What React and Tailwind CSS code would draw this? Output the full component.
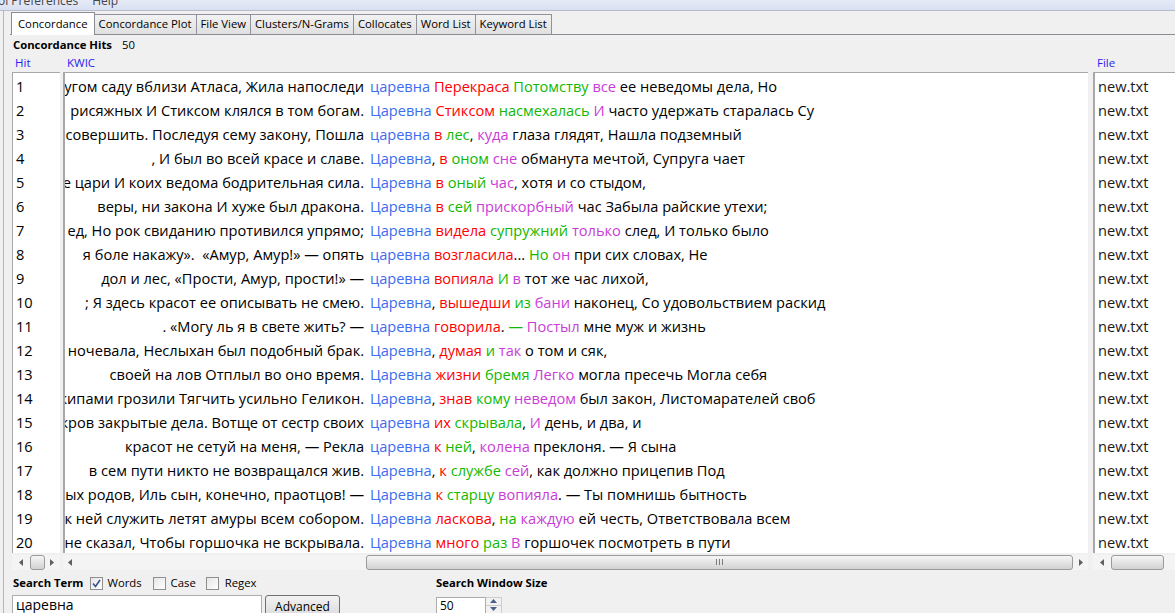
const ROWS = [
  ["угом саду вблизи Атласа, Жила напоследи", "царевна", [[" "], ["r", "Перекраса"], [" "], ["g", "Потомству"], [" "], ["m", "все"]], " ее неведомы дела, Но"],
  ["рисяжных И Стиксом клялся в том богам.", "Царевна", [[" "], ["r", "Стиксом"], [" "], ["g", "насмехалась"], [" "], ["m", "И"]], " часто удержать старалась Су"],
  ["совершить. Последуя сему закону, Пошла", "царевна", [[" "], ["r", "в"], [" "], ["g", "лес"], [", "], ["m", "куда"]], " глаза глядят, Нашла подземный"],
  [", И был во всей красе и славе.", "Царевна", [[", "], ["r", "в"], [" "], ["g", "оном"], [" "], ["m", "сне"]], " обманута мечтой, Супруга чает"],
  ["е цари И коих ведома бодрительная сила.", "Царевна", [[" "], ["r", "в"], [" "], ["g", "оный"], [" "], ["m", "час"]], ", хотя и со стыдом,"],
  ["веры, ни закона И хуже был дракона.", "Царевна", [[" "], ["r", "в"], [" "], ["g", "сей"], [" "], ["m", "прискорбный"]], " час Забыла райские утехи;"],
  ["ед, Но рок свиданию противился упрямо;", "Царевна", [[" "], ["r", "видела"], [" "], ["g", "супружний"], [" "], ["m", "только"]], " след, И только было"],
  ["я боле накажу».  «Амур, Амур!» — опять", "царевна", [[" "], ["r", "возгласила"], ["... "], ["g", "Но"], [" "], ["m", "он"]], " при сих словах, Не"],
  ["дол и лес, «Прости, Амур, прости!» —", "царевна", [[" "], ["r", "вопияла"], [" "], ["g", "И"], [" "], ["m", "в"]], " тот же час лихой,"],
  ["; Я здесь красот ее описывать не смею.", "Царевна", [[", "], ["r", "вышедши"], [" "], ["g", "из"], [" "], ["m", "бани"]], " наконец, Со удовольствием раскид"],
  [". «Могу ль я в свете жить? —", "царевна", [[" "], ["r", "говорила"], [". "], ["g", "—"], [" "], ["m", "Постыл"]], " мне муж и жизнь"],
  ["ночевала, Неслыхан был подобный брак.", "Царевна", [[", "], ["r", "думая"], [" "], ["g", "и"], [" "], ["m", "так"]], " о том и сяк,"],
  ["своей на лов Отплыл во оно время.", "Царевна", [[" "], ["r", "жизни"], [" "], ["g", "бремя"], [" "], ["m", "Легко"]], " могла пресечь Могла себя"],
  ["кипами грозили Тягчить усильно Геликон.", "Царевна", [[", "], ["r", "знав"], [" "], ["g", "кому"], [" "], ["m", "неведом"]], " был закон, Листомарателей своб"],
  ["кров закрытые дела. Вотще от сестр своих", "царевна", [[" "], ["r", "их"], [" "], ["g", "скрывала"], [", "], ["m", "И"]], " день, и два, и"],
  ["красот не сетуй на меня, — Рекла", "царевна", [[" "], ["r", "к"], [" "], ["g", "ней"], [", "], ["m", "колена"]], " преклоня. — Я сына"],
  ["в сем пути никто не возвращался жив.", "Царевна", [[", "], ["r", "к"], [" "], ["g", "службе"], [" "], ["m", "сей"]], ", как должно прицепив Под"],
  ["ых родов, Иль сын, конечно, праотцов! —", "Царевна", [[" "], ["r", "к"], [" "], ["g", "старцу"], [" "], ["m", "вопияла"]], ". — Ты помнишь бытность"],
  ["к ней служить летят амуры всем собором.", "Царевна", [[" "], ["r", "ласкова"], [", "], ["g", "на"], [" "], ["m", "каждую"]], " ей честь, Ответствовала всем"],
  ["не сказал, Чтобы горшочка не вскрывала.", "Царевна", [[" "], ["r", "много"], [" "], ["g", "раз"], [" "], ["m", "В"]], " горшочек посмотреть в пути"],
];

const TABS = ["Concordance Plot", "File View", "Clusters/N-Grams", "Collocates", "Word List", "Keyword List"];

const COLOR = { r: "text-[#ff0000]", g: "text-[#12b800]", m: "text-[#c93cd6]" };

function Arrow({ dir }) {
  const pts = {
    left: "5,1 1,4.5 5,8",
    right: "1,1 5,4.5 1,8",
    up: "1,5 4.5,1 8,5",
    down: "1,1 4.5,5 8,1",
  }[dir];
  const vertical = dir === "up" || dir === "down";
  return (
    <svg width={vertical ? 9 : 6} height={vertical ? 6 : 9} viewBox={vertical ? "0 0 9 6" : "0 0 6 9"}>
      <polygon points={pts} fill={vertical ? "#4d6185" : "#606060"} />
    </svg>
  );
}

function Thumb({ className, grip }) {
  return (
    <div
      className={`h-[15px] rounded-[3px] border border-[#9a9a9a] bg-gradient-to-b from-[#f6f6f6] via-[#e4e4e4] to-[#d2d2d2] flex items-center justify-center ${className}`}
    >
      {grip && (
        <div className="flex gap-[2px]">
          <div className="w-px h-[6px] bg-[#7a7a7a]" />
          <div className="w-px h-[6px] bg-[#7a7a7a]" />
          <div className="w-px h-[6px] bg-[#7a7a7a]" />
        </div>
      )}
    </div>
  );
}

function Check({ checked }) {
  return (
    <div className="w-[13px] h-[13px] border border-[#8e8f8f] bg-gradient-to-br from-[#e6e6e6] to-white flex items-center justify-center">
      {checked && (
        <svg width="9" height="9" viewBox="0 0 9 9">
          <path d="M1 4.5 L3.5 7.5 L8 1" stroke="#3c4f93" strokeWidth="1.6" fill="none" />
        </svg>
      )}
    </div>
  );
}

export default function App() {
  return (
    <div className="w-[1175px] h-[613px] overflow-hidden bg-[#f0f0f0] font-['Open_Sans',sans-serif] text-black relative">
      {/* menu bar, cut off at the top */}
      <div className="h-[11px] bg-gradient-to-b from-[#e6eaf7] to-[#d9e0f2] border-b border-[#b7bccb] overflow-hidden">
        <div className="-mt-[6px] text-[12px] leading-[14px] text-[#444] whitespace-nowrap -ml-[2px]">
          ol Preferences<span className="ml-[14px]">Help</span>
        </div>
      </div>

      <div className="flex h-[602px]">
        <div className="w-[3px]" />
        <div className="w-px bg-[#b5b5b5]" />
        <div className="flex-1 flex flex-col pl-[8px]">
          {/* tabs */}
          <div className="flex items-end h-[25px] mt-[1px] border-b border-[#898c95] -ml-[2px] pl-[1px] text-[11.3px]">
            <div className="h-[23px] px-[6px] bg-white border border-b-0 border-[#898c95] flex items-center -mb-px relative">
              Concordance
            </div>
            {TABS.map((t) => (
              <div
                key={t}
                className="h-[20px] px-[4px] -ml-px first:ml-0 bg-gradient-to-b from-[#f2f2f2] to-[#e0e0e0] border border-b-0 border-[#8f929b] flex items-center"
              >
                {t}
              </div>
            ))}
          </div>

          <div className="h-[18px] mt-[2px] flex items-center text-[11.3px] pl-[1px]">
            <span className="font-bold">Concordance Hits</span>
            <span className="ml-[10px]">50</span>
          </div>

          {/* column headers */}
          <div className="h-[18px] mt-[1px] flex items-end text-[11.5px] text-[#2a1ef0] leading-[16px]">
            <div className="w-[50px] pl-[3px]">Hit</div>
            <div className="flex-1 pl-[5px]">KWIC</div>
            <div className="w-[80px] pl-[2px]">File</div>
          </div>

          {/* table panes */}
          <div className="flex mt-[1px] h-[481px] text-[14.6px] leading-[24px]">
            <div className="w-[48px] bg-white border-t border-l border-[#a8a8a8] pt-px">
              {ROWS.map((_, i) => (
                <div key={i} className="h-[24px] pl-[3px]">{i + 1}</div>
              ))}
            </div>
            <div className="w-[3px] bg-[#f0f0f0]" />
            <div className="w-[1025px] bg-white border-t border-l-2 border-[#a8a8a8] pt-px overflow-hidden">
              {ROWS.map(([left, kw, hits, rest], i) => (
                <div key={i} className="h-[24px] flex whitespace-pre">
                  <div className="w-[299px] shrink-0 overflow-hidden flex justify-end">
                    <span className="shrink-0">{left}</span>
                  </div>
                  <div className="pl-[6px] shrink-0">
                    <span className="text-[#3d6cf0]">{kw}</span>
                    {hits.map(([c, w], j) =>
                      w === undefined ? <span key={j}>{c}</span> : <span key={j} className={COLOR[c]}>{w}</span>
                    )}
                    <span>{rest}</span>
                  </div>
                </div>
              ))}
            </div>
            <div className="w-[5px] bg-[#f0f0f0]" />
            <div className="flex-1 bg-white border-t border-l-2 border-[#a8a8a8] pt-px">
              {ROWS.map((_, i) => (
                <div key={i} className="h-[24px] pl-[3px] text-[#1a1a1a]">new.txt</div>
              ))}
            </div>
          </div>

          {/* scrollbars */}
          <div className="flex h-[19px] items-center pt-[2px]">
            <div className="w-[48px] flex items-center h-full bg-[#f4f4f4]">
              <div className="w-[18px] flex justify-center"><Arrow dir="left" /></div>
              <Thumb className="w-[15px]" />
              <div className="w-[14px] flex justify-center"><Arrow dir="right" /></div>
            </div>
            <div className="w-[3px]" />
            <div className="w-[1025px] flex items-center h-full bg-[#f4f4f4]">
              <div className="w-[14px] flex justify-center"><Arrow dir="left" /></div>
              <div className="w-[289px]" />
              <Thumb className="w-[707px]" grip />
              <div className="w-[15px] flex justify-center"><Arrow dir="right" /></div>
            </div>
            <div className="w-[5px]" />
            <div className="flex-1 flex items-center h-full bg-[#f4f4f4]">
              <div className="w-[18px] flex justify-center"><Arrow dir="left" /></div>
              <Thumb className="w-[53px]" />
            </div>
          </div>

          {/* search controls */}
          <div className="flex mt-[6px] text-[11.3px]">
            <div className="w-[424px]">
              <div className="flex items-center h-[16px] pl-[1px]">
                <span className="font-bold">Search Term</span>
                <div className="ml-[7px]"><Check checked /></div>
                <span className="ml-[4px]">Words</span>
                <div className="ml-[11px]"><Check /></div>
                <span className="ml-[5px]">Case</span>
                <div className="ml-[10px]"><Check /></div>
                <span className="ml-[6px]">Regex</span>
              </div>
              <div className="flex mt-[3px]">
                <div className="w-[250px] h-[22px] bg-white border border-[#abadb3] pl-[3px] text-[14px] leading-[18px]">
                  царевна
                </div>
                <div className="ml-[3px] w-[75px] h-[22px] rounded-[3px] border border-[#707070] bg-gradient-to-b from-[#f2f2f2] to-[#dcdcdc] flex justify-center pt-[2px] text-[12px]">
                  Advanced
                </div>
              </div>
            </div>
            <div>
              <div className="h-[16px] flex items-center font-bold">Search Window Size</div>
              <div className="flex mt-[5px] h-[17px]">
                <div className="w-[50px] bg-white border border-[#abadb3] pl-[3px] leading-[15px] text-[12px]">50</div>
                <div className="w-[16px] flex flex-col border border-l-0 border-[#cdcdcd] bg-[#f2f2f2]">
                  <div className="h-[8px] flex items-center justify-center border-b border-[#cdcdcd]"><Arrow dir="up" /></div>
                  <div className="flex-1 flex items-center justify-center"><Arrow dir="down" /></div>
                </div>
              </div>
            </div>
          </div>
        </div>
      </div>
    </div>
  );
}
